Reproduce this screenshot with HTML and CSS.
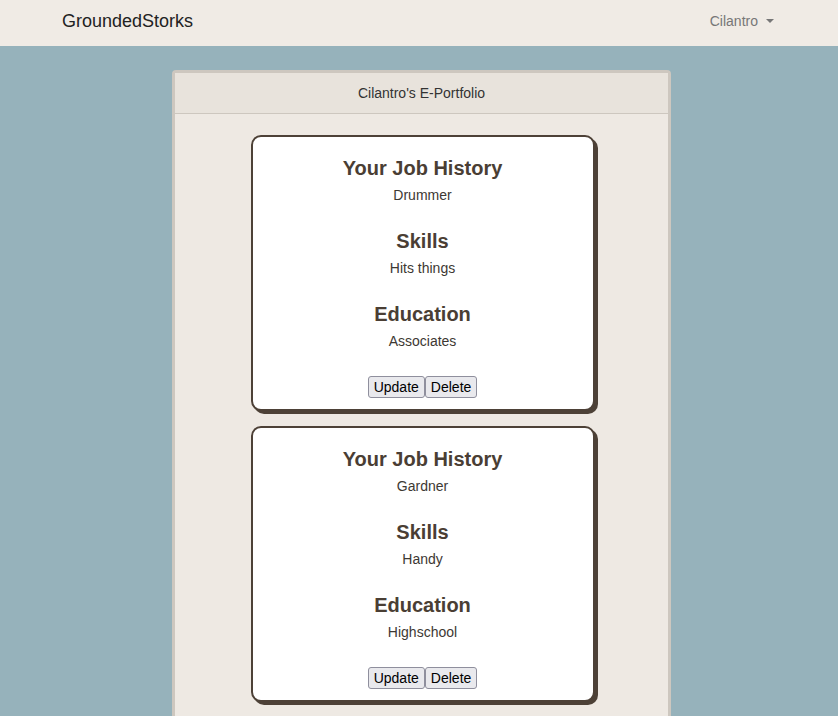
FILE: index.html
```html
<!DOCTYPE html>
<html>
<head>
<meta charset="utf-8">
<link rel="stylesheet" href="styles.css">
</head>
<body>
<nav class="navbar">
  <a class="brand">GroundedStorks</a>
  <a class="user">Cilantro <span class="caret"></span></a>
</nav>
<div class="main">
  <div class="panel">
    <div class="panel-heading">Cilantro's E-Portfolio</div>
    <div class="panel-body">
      <div class="card">
        <h3>Your Job History</h3>
        <p>Drummer</p>
        <h3>Skills</h3>
        <p>Hits things</p>
        <h3>Education</h3>
        <p class="last">Associates</p>
        <div class="actions"><button>Update</button><button>Delete</button></div>
      </div>
      <div class="card">
        <h3>Your Job History</h3>
        <p>Gardner</p>
        <h3>Skills</h3>
        <p>Handy</p>
        <h3>Education</h3>
        <p class="last">Highschool</p>
        <div class="actions"><button>Update</button><button>Delete</button></div>
      </div>
    </div>
  </div>
</div>
</body>
</html>
```
FILE: styles.css
```css
html, body {
  margin: 0;
  padding: 0;
}
body {
  background: #96b2bb;
  font-family: "Liberation Sans", Arial, sans-serif;
  font-size: 14px;
  color: #333;
  min-height: 716px;
}
.navbar {
  height: 46px;
  background: #f0ebe5;
  display: flex;
  align-items: center;
  justify-content: space-between;
  padding: 0 64px 0 62px;
  box-sizing: border-box;
}
.brand {
  font-size: 18px;
  color: #222;
  line-height: 20px;
  margin-top: -4px;
}
.user {
  font-size: 14px;
  color: #777;
  line-height: 20px;
  margin-top: -4px;
  display: flex;
  align-items: center;
}
.caret {
  display: inline-block;
  width: 0;
  height: 0;
  margin-left: 8px;
  border-top: 4px solid #777;
  border-left: 4px solid transparent;
  border-right: 4px solid transparent;
}
.main {
  display: flex;
  justify-content: center;
  padding-left: 5px;
  padding-top: 24px;
}
.panel {
  width: 499px;
  border: 3px solid #cdc7bf;
  border-bottom: 0;
  border-radius: 4px 4px 0 0;
  background: #eee9e3;
  box-sizing: border-box;
}
.panel-heading {
  height: 40px;
  background: #e8e3dc;
  border-bottom: 1px solid #cdc7bf;
  text-align: center;
  line-height: 40px;
  color: #333;
  font-size: 14px;
}
.panel-body {
  padding: 21px 0 30px 0;
  display: flex;
  flex-direction: column;
  align-items: center;
  gap: 15px;
}
.card {
  width: 344px;
  box-sizing: border-box;
  background: #fff;
  border: 2px solid #4d4137;
  border-radius: 10px;
  box-shadow: 3px 3px 0 #4d4137;
  text-align: center;
  padding: 20px 0 11px;
  margin-left: 2px;
}
.card h3 {
  margin: 0 0 6px;
  font-size: 20px;
  line-height: 22px;
  font-weight: bold;
  color: #4a3e34;
}
.card p {
  margin: 0 0 25px;
  line-height: 20px;
  color: #3d3833;
}
.card p.last {
  margin-bottom: 25px;
}
.actions {
  display: flex;
  justify-content: center;
}
.actions button {
  font-family: "Liberation Sans", Arial, sans-serif;
  font-size: 14px;
  height: 22px;
  box-sizing: border-box;
  padding: 0 5px;
  margin: 0;
  background: #e9e9ed;
  border: 1px solid #8f8f9d;
  border-radius: 3px;
  color: #000;
  line-height: 20px;
}
```
